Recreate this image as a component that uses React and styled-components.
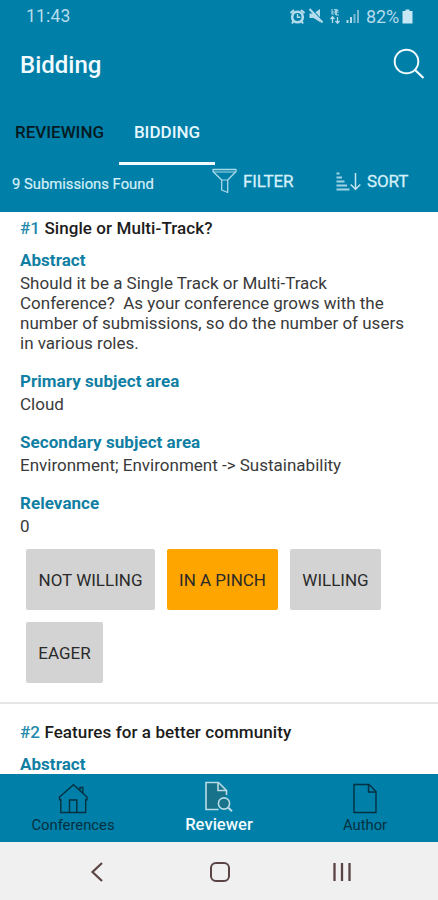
import React from "react";
import styled, { createGlobalStyle } from "styled-components";

const BLUE = "#007fa8";

const GlobalStyle = createGlobalStyle`
  * {
    box-sizing: border-box;
  }
  body {
    margin: 0;
    background: #fff;
    font-family: Roboto, "Liberation Sans", sans-serif;
  }
  svg {
    display: block;
    flex: none;
    fill: none;
  }
`;

const Screen = styled.div`
  display: flex;
  flex-direction: column;
  width: 438px;
  height: 900px;
  overflow: hidden;
  background: #fff;
`;
const Header = styled.header`
  flex: none;
  height: 212px;
  background: ${BLUE};
  color: #f2fbff;
`;
const StatusBar = styled.div`
  display: flex;
  align-items: center;
  justify-content: space-between;
  height: 32px;
  padding: 0 25px 0 26px;
  color: #b5dcec;
`;
const Clock = styled.span`
  font-size: 17.5px;
  letter-spacing: 0.2px;
`;
const StatusIcons = styled.div`
  display: flex;
  align-items: center;
`;
const Battery = styled.span`
  font-size: 18px;
  letter-spacing: -0.1px;
  margin: 0 3px 0 6px;
`;
const TitleRow = styled.div`
  display: flex;
  align-items: center;
  justify-content: space-between;
  height: 66px;
  padding: 0 13px 0 20px;
`;
const Title = styled.h1`
  margin: 0;
  font-size: 24px;
  font-weight: 500;
`;
const Tabs = styled.div`
  display: flex;
  height: 67px;
`;
const Tab = styled.div`
  width: ${(props) => props.$width}px;
  padding-top: 25px;
  font-size: 17px;
  line-height: 19px;
  font-weight: 500;
  text-align: center;
  white-space: nowrap;
  color: ${(props) => (props.$active ? "#e6f7ff" : "#061a22")};
  border-bottom: 3px solid ${(props) => (props.$active ? "#f2fbff" : "transparent")};
`;
const Toolbar = styled.div`
  display: flex;
  height: 47px;
  padding-left: 12px;
  color: #d5eff9;
`;
const Found = styled.span`
  width: 200px;
  padding-top: 10px;
  font-size: 14.8px;
  line-height: 18px;
  -webkit-text-stroke: 0.2px;
`;
const ToolButton = styled.div`
  display: flex;
  align-items: center;
  gap: 6px;
  width: ${(props) => props.$width}px;
  height: 32px;
  font-size: 17px;
  letter-spacing: -0.15px;
  -webkit-text-stroke: 0.3px;
`;
const List = styled.main`
  flex: 1;
  min-height: 0;
  overflow: hidden;
`;
const Submission = styled.article`
  padding: ${(props) => (props.$first ? 6 : 18)}px 20px 19px;
  border-bottom: 2px solid #e6e6e6;
`;
const Heading = styled.h2`
  margin: 0 0 12px;
  font-size: 17px;
  font-weight: 500;
  line-height: 20px;
  letter-spacing: 0.08px;
  color: #1c1c1c;
  white-space: nowrap;

  & span {
    color: #2489ab;
  }
`;
const Field = styled.section`
  margin-bottom: 18px;
`;
const Label = styled.h3`
  margin: 0 0 3px;
  font-size: 17px;
  font-weight: 700;
  line-height: 20px;
  letter-spacing: 0.05px;
  color: #117fa3;
`;
const Value = styled.p`
  margin: 0;
  font-size: 17px;
  line-height: 20px;
  color: #3a3a3a;
  white-space: pre;
`;
const Bids = styled.div`
  display: flex;
  flex-wrap: wrap;
  gap: 12px;
  margin: -5px 0 0 6px;
`;
const BidButton = styled.button`
  width: ${(props) => props.$width}px;
  height: 61px;
  padding: 0;
  border: 0;
  border-radius: 2px;
  font-family: inherit;
  font-size: 17px;
  white-space: nowrap;
  color: #2a2a2a;
  background: ${(props) => (props.$selected ? "#ffa500" : "#d3d3d3")};
`;
const BottomNav = styled.nav`
  display: grid;
  grid-template-columns: repeat(3, 1fr);
  flex: none;
  height: 68px;
  background: ${BLUE};
`;
const NavItem = styled.div`
  display: flex;
  flex-direction: column;
  align-items: center;
  padding-top: 6px;
  font-size: ${(props) => (props.$active ? 16.6 : 14.8)}px;
  line-height: 18px;
  color: ${(props) => (props.$active ? "#effaff" : "#04303f")};
  font-weight: ${(props) => (props.$active ? 500 : 400)};
`;
const SystemNav = styled.div`
  display: grid;
  grid-template-columns: 194px 52px 192px;
  align-items: center;
  justify-items: center;
  flex: none;
  height: 58px;
  padding-top: 1px;
  background: #f0f0f0;
`;

const AlarmIcon = () => (
  <svg width="17" height="17" viewBox="0 0 17 17">
    <circle cx="8.5" cy="9" r="6.6" fill="#b5dcec" />
    <path d="M1.5 5 L5 2 M12 2 L15.5 5 M4.5 13 L3 15.5 M12.5 13 L14 15.5" stroke="#b5dcec" strokeWidth="2" />
    <circle cx="8.5" cy="9" r="4" fill={BLUE} />
    <path d="M8.5 6 V9.2 H11.3" stroke="#b5dcec" strokeWidth="1.4" />
  </svg>
);

const MuteIcon = () => (
  <svg width="21" height="16" viewBox="-3 0 21 16">
    <path d="M0.5 5.5 H4.5 L11 1 V14 L4.5 10 H0.5 Z" fill="#b5dcec" />
    <path d="M1.5 0 L13.5 13" stroke={BLUE} strokeWidth="1.4" />
    <path d="M0.5 1 L13.5 14.5" stroke="#b5dcec" strokeWidth="2" />
  </svg>
);

const LteIcon = () => (
  <svg width="18" height="16" viewBox="-2 0 18 16">
    <path d="M3 1 V6 H5 M5 1.5 H8.5 M6.5 1.5 V7 M9.5 2.5 H7.5 V7 H10 M3 4 H9.5" stroke="#9fcfe2" strokeWidth="1.2" />
    <path d="M3.5 15 V9 M1.5 11 L3.5 8.8 L5.5 11 M8.5 9 V15 M6.5 13 L8.5 15.2 L10.5 13" stroke="#b5dcec" strokeWidth="1.3" />
  </svg>
);

const SignalIcon = () => (
  <svg width="15" height="14" viewBox="-1 0 15 14">
    <path d="M1.5 11 V14 M5 8 V14" stroke="#b5dcec" strokeWidth="2" />
    <path d="M8.5 5 V14 M12 1 V14" stroke="#78b8d0" strokeWidth="2" />
  </svg>
);

const BatteryIcon = () => (
  <svg width="11" height="15" viewBox="0 0 11 15">
    <path d="M3.5 0.5 H7.5 V2 H10.5 V14.5 H0.5 V2 H3.5 Z" fill="#c6e8f4" />
  </svg>
);

const SearchIcon = () => (
  <svg width="32" height="34" viewBox="0 0 32 34" stroke="#f2fbff" strokeWidth="2">
    <circle cx="13.5" cy="13.5" r="11.8" />
    <path d="M21.5 21.5 L30.5 30" strokeWidth="2.3" />
  </svg>
);

const FilterIcon = () => (
  <svg width="25" height="26" viewBox="0 0 25 26" stroke="#a9d9e9" strokeWidth="1.3" strokeLinejoin="round">
    <path d="M1 1.5 H24 V3.5 L15.7 12 V24.5 L9.7 22 V12 L1 3.5 Z" />
    <path d="M2 4 H23 M9.7 12 H15.7" strokeWidth="1" />
  </svg>
);

const SortIcon = () => (
  <svg width="25" height="19" viewBox="0 0 25 19">
    <path d="M0.5 1.5 H3.5 M0.5 5.5 H6 M0.5 9.5 H8.5 M0.5 13.5 H11 M0.5 17.5 H13.5" stroke="#a0d3e5" strokeWidth="1.8" />
    <path d="M19.5 1 V17 M14.7 12.5 L19.5 17.3 L24.3 12.5" stroke="#c4e6f2" strokeWidth="1.5" />
  </svg>
);

const HomeIcon = () => (
  <svg width="30" height="36" viewBox="0 0 30 36" stroke="#04303f" strokeWidth="1.4">
    <path d="M1.5 20.5 V17 L15.5 4.7 L29 17 V20.5 M2.8 19 V32.5 H27.7 V19" />
    <path d="M11.5 32 V20 H18.8 V32" />
    <path d="M22 10 V7.5 H24.8 V13" />
  </svg>
);

const ReviewIcon = () => (
  <svg width="30" height="36" viewBox="0 0 30 36" stroke="#b8dbe4" strokeWidth="1.6">
    <path d="M13 29.5 H2 V2.5 H14.5 L22.5 10.5 V15 L15 22 Z" fill="#17728a" stroke="none" />
    <path d="M14.5 29.5 H2 V2.5 H14.5 L22.5 10.5 V15" />
    <path d="M14 2.5 V10.5 H22.5" />
    <circle cx="20" cy="23.5" r="5.6" fill="#17728a" />
    <path d="M24.3 27.8 L28 31.3" strokeWidth="2" />
  </svg>
);

const DocIcon = () => (
  <svg width="24" height="36" viewBox="0 0 24 36" stroke="#04303f" strokeWidth="1.4">
    <path d="M1 4.5 H16 L23 11.5 V32.5 H1 Z" />
    <path d="M15.5 4.5 V12 H23" />
  </svg>
);

const submissions = [
  {
    title: "Single or Multi-Track?",
    fields: [
      [
        "Abstract",
        "Should it be a Single Track or Multi-Track\nConference? \u00a0As your conference grows with the\nnumber of submissions, so do the number of users\nin various roles.",
      ],
      ["Primary subject area", "Cloud"],
      ["Secondary subject area", "Environment; Environment -> Sustainability"],
      ["Relevance", "0"],
    ],
  },
  { title: "Features for a better community", fields: [["Abstract", ""]] },
];

const bids = [
  { label: "NOT WILLING", width: 129 },
  { label: "IN A PINCH", width: 111, selected: true },
  { label: "WILLING", width: 91 },
  { label: "EAGER", width: 77 },
];

const App = () => (
  <>
    <GlobalStyle />
    <Screen>
      <Header>
        <StatusBar>
          <Clock>11:43</Clock>
          <StatusIcons>
            <AlarmIcon />
            <MuteIcon />
            <LteIcon />
            <SignalIcon />
            <Battery>82%</Battery>
            <BatteryIcon />
          </StatusIcons>
        </StatusBar>
        <TitleRow>
          <Title>Bidding</Title>
          <SearchIcon />
        </TitleRow>
        <Tabs>
          <Tab $width={119}>REVIEWING</Tab>
          <Tab $width={96} $active>BIDDING</Tab>
        </Tabs>
        <Toolbar>
          <Found>9 Submissions Found</Found>
          <ToolButton $width={124}>
            <FilterIcon />
            FILTER
          </ToolButton>
          <ToolButton $width={80}>
            <SortIcon />
            SORT
          </ToolButton>
        </Toolbar>
      </Header>
      <List>
        {submissions.map((item, i) => (
          <Submission key={item.title} $first={i === 0}>
            <Heading>
              <span>#{i + 1}</span> {item.title}
            </Heading>
            {item.fields.map(([label, value]) => (
              <Field key={label}>
                <Label>{label}</Label>
                <Value>{value}</Value>
              </Field>
            ))}
            {i === 0 && (
              <Bids>
                {bids.map((bid) => (
                  <BidButton key={bid.label} $width={bid.width} $selected={bid.selected}>
                    {bid.label}
                  </BidButton>
                ))}
              </Bids>
            )}
          </Submission>
        ))}
      </List>
      <BottomNav>
        <NavItem>
          <HomeIcon />
          Conferences
        </NavItem>
        <NavItem $active>
          <ReviewIcon />
          Reviewer
        </NavItem>
        <NavItem>
          <DocIcon />
          Author
        </NavItem>
      </BottomNav>
      <SystemNav>
        <svg width="14" height="20" viewBox="0 0 14 20" stroke="#5a4343" strokeWidth="2.2">
          <path d="M12 1 L2.5 10 L12 19" />
        </svg>
        <svg width="20" height="20" viewBox="0 0 20 20" stroke="#5a4343" strokeWidth="2">
          <rect x="1" y="1" width="18" height="18" rx="5" />
        </svg>
        <svg width="20" height="20" viewBox="0 0 20 20" stroke="#5a4343" strokeWidth="2.3">
          <path d="M2.5 1 V19 M10 1 V19 M17.5 1 V19" />
        </svg>
      </SystemNav>
    </Screen>
  </>
);

export default App;
